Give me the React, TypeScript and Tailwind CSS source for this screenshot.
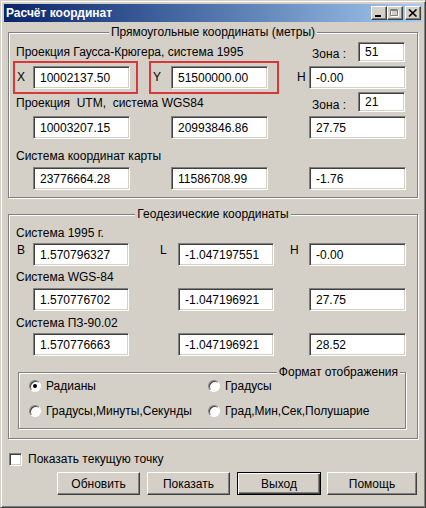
import React from "react";

const sunken =
  "border border-t-[#808080] border-l-[#808080] border-r-white border-b-white shadow-[inset_1px_1px_0_#404040,inset_-1px_-1px_0_#d4d0c8]";
const raised =
  "border border-t-white border-l-white border-r-[#404040] border-b-[#404040] shadow-[inset_-1px_-1px_0_#808080]";
const etched =
  "border border-[#808080] shadow-[1px_1px_0_#fff,inset_1px_1px_0_#fff]";

function Field({ value, w = "w-[97px]", h = "h-[23px]" }: { value: string; w?: string; h?: string }) {
  return (
    <div className={`${w} ${h} shrink-0 bg-white ${sunken} flex items-center pl-[6px] text-[12px] leading-none`}>
      {value}
    </div>
  );
}

function Radio({ checked, label }: { checked?: boolean; label: string }) {
  return (
    <div className="flex items-center gap-[5px] h-[14px]">
      <div className="w-[12px] h-[12px] rounded-full bg-white border border-t-[#808080] border-l-[#808080] border-r-white border-b-white shadow-[inset_1px_1px_0_#404040] flex items-center justify-center">
        {checked && <div className="w-[4px] h-[4px] rounded-full bg-black" />}
      </div>
      <span className="leading-[14px]">{label}</span>
    </div>
  );
}

function TitleBtn({ children }: { children: React.ReactNode }) {
  return (
    <div className={`w-[16px] h-[14px] bg-[#d4d0c8] ${raised} flex items-center justify-center`}>{children}</div>
  );
}

function Button({ label, w = "w-[83px]", def }: { label: string; w?: string; def?: boolean }) {
  return (
    <div
      className={
        def
          ? `${w} h-[23px] bg-[#d4d0c8] border border-black shadow-[inset_1px_1px_0_#fff,inset_-1px_-1px_0_#404040,inset_-2px_-2px_0_#808080] flex items-center justify-center`
          : `${w} h-[23px] bg-[#d4d0c8] ${raised} flex items-center justify-center`
      }
    >
      {label}
    </div>
  );
}

export default function App() {
  return (
    <div className="w-[426px] h-[508px] bg-[#d4d0c8] border border-t-[#d4d0c8] border-l-[#d4d0c8] border-r-[#404040] border-b-[#404040] shadow-[inset_1px_1px_0_#fff,inset_-1px_-1px_0_#808080] p-[3px] flex flex-col font-['Liberation_Sans',Arial,sans-serif] text-[12px] text-black">
      {/* caption */}
      <div className="h-[18px] shrink-0 flex items-center bg-linear-to-r from-[#0a246a] to-[#a6caf0] pl-[2px] pr-[1px]">
        <span className="text-white font-bold text-[12px] leading-none">Расчёт координат</span>
        <div className="ml-auto flex items-center">
          <TitleBtn>
            <svg width="10" height="8" viewBox="0 0 10 8">
              <rect x="1" y="6" width="6" height="2" fill="#000" />
            </svg>
          </TitleBtn>
          <TitleBtn>
            <svg width="10" height="9" viewBox="0 0 10 9">
              <path d="M1.5 1.5h7v6h-7z" fill="none" stroke="#fff" />
              <path d="M0.5 0.5h7v6h-7zM0.5 1.5h7" fill="none" stroke="#808080" />
            </svg>
          </TitleBtn>
          <div className="ml-[2px]">
            <TitleBtn>
              <svg width="10" height="8" viewBox="0 0 10 8">
                <path d="M1 0.5l7.5 7M8.5 0.5l-7.5 7" stroke="#000" strokeWidth="1.6" />
              </svg>
            </TitleBtn>
          </div>
        </div>
      </div>

      {/* rectangular coordinates */}
      <fieldset className={`mt-[3px] ml-[4px] w-[410px] ${etched} pt-[3px] pb-[7px]`}>
        <legend className="mx-auto px-[2px] bg-[#d4d0c8] leading-[14px]">Прямоугольные координаты (метры)</legend>

        <div className="h-[20px] flex items-center">
          <span className="ml-[7px]">Проекция Гаусса-Крюгера, система 1995</span>
          <span className="ml-auto pt-[4px]">Зона :</span>
          <div className="ml-[12px] mr-[12px]">
            <Field value="51" w="w-[47px]" h="h-[20px]" />
          </div>
        </div>

        <div className="-mt-[1px] h-[33px] flex items-center">
          <div className="ml-[4px] w-[125px] h-[33px] border-2 border-[#d83838] flex items-center pl-[2px]">
            <span className="w-[16px] -mt-[2px]">X</span>
            <Field value="10002137.50" />
          </div>
          <div className="ml-[11px] w-[130px] h-[33px] border-2 border-[#d83838] flex items-center pl-[2px]">
            <span className="w-[18px] -mt-[2px]">Y</span>
            <Field value="51500000.00" />
          </div>
          <span className="ml-[18px] w-[12px] -mt-[2px]">H</span>
          <Field value="-0.00" />
        </div>

        <div className="h-[18px] flex items-center">
          <span className="ml-[7px] whitespace-pre">Проекция  UTM,  система WGS84</span>
          <span className="ml-auto pt-[4px]">Зона :</span>
          <div className="ml-[12px] mr-[12px] self-end">
            <Field value="21" w="w-[47px]" h="h-[20px]" />
          </div>
        </div>

        <div className="mt-[4px] flex gap-[41px] pl-[24px]">
          <Field value="10003207.15" />
          <Field value="20993846.86" />
          <Field value="27.75" />
        </div>

        <div className="mt-[10px] ml-[7px] leading-[14px]">Система координат карты</div>

        <div className="mt-[4px] flex gap-[41px] pl-[24px]">
          <Field value="23776664.28" />
          <Field value="11586708.99" />
          <Field value="-1.76" />
        </div>
      </fieldset>

      {/* geodetic coordinates */}
      <fieldset className={`mt-[9px] ml-[4px] w-[410px] ${etched} pt-[5px] pb-[9px]`}>
        <legend className="mx-auto px-[2px] bg-[#d4d0c8] leading-[14px]">Геодезические координаты</legend>

        <div className="ml-[7px] leading-[14px]">Система 1995 г.</div>
        <div className="mt-[3px] flex items-start">
          <span className="ml-[8px] w-[16px] leading-[14px]">B</span>
          <Field value="1.570796327" w="w-[96px]" />
          <span className="ml-[31px] w-[18px] leading-[14px]">L</span>
          <Field value="-1.047197551" w="w-[96px]" />
          <span className="ml-[16px] w-[19px] leading-[14px]">H</span>
          <Field value="-0.00" />
        </div>

        <div className="mt-[4px] ml-[7px] leading-[14px]">Система WGS-84</div>
        <div className="mt-[4px] flex items-start pl-[24px]">
          <Field value="1.570776702" w="w-[96px]" />
          <div className="ml-[49px]">
            <Field value="-1.047196921" w="w-[96px]" />
          </div>
          <div className="ml-[35px]">
            <Field value="27.75" />
          </div>
        </div>

        <div className="mt-[5px] ml-[7px] leading-[14px]">Система ПЗ-90.02</div>
        <div className="mt-[3px] flex items-start pl-[24px]">
          <Field value="1.570776663" w="w-[96px]" />
          <div className="ml-[49px]">
            <Field value="-1.047196921" w="w-[96px]" />
          </div>
          <div className="ml-[35px]">
            <Field value="28.52" />
          </div>
        </div>

        <fieldset className={`mt-[9px] ml-[9px] w-[388px] ${etched} pb-[10px]`}>
          <legend className="ml-auto mr-[5px] px-[2px] bg-[#d4d0c8] leading-[14px]">Формат отображения</legend>
          <div className="flex pl-[10px]">
            <div className="w-[179px]">
              <Radio checked label="Радианы" />
            </div>
            <Radio label="Градусы" />
          </div>
          <div className="mt-[11px] flex pl-[10px]">
            <div className="w-[179px]">
              <Radio label="Градусы,Минуты,Секунды" />
            </div>
            <Radio label="Град,Мин,Сек,Полушарие" />
          </div>
        </fieldset>
      </fieldset>

      {/* bottom */}
      <div className="mt-[13px] ml-[5px] flex items-center gap-[6px]">
        <div className={`w-[13px] h-[13px] bg-white ${sunken}`} />
        <span className="leading-[14px]">Показать текущую точку</span>
      </div>

      <div className="mt-[6px] flex justify-end mr-[5px]">
        <Button label="Обновить" />
        <div className="ml-[7px]">
          <Button label="Показать" />
        </div>
        <div className="ml-[7px]">
          <Button label="Выход" w="w-[84px]" def />
        </div>
        <div className="ml-[6px]">
          <Button label="Помощь" w="w-[90px]" />
        </div>
      </div>
    </div>
  );
}
